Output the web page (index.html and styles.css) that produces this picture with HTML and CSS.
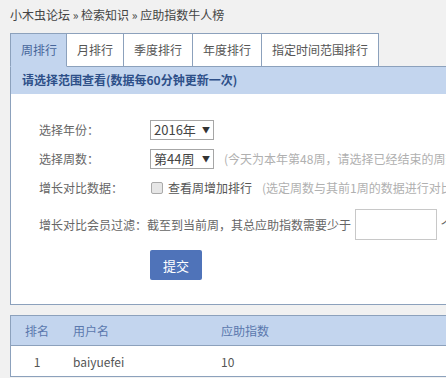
FILE: index.html
```html
<!DOCTYPE html>
<html>
<head>
    <meta charset="utf-8">
    <link rel="stylesheet" href="styles.css">
</head>
<body>
    <div class="page">
        <div class="crumb">小木虫论坛 » 检索知识 » 应助指数牛人榜</div>

        <div class="tabs">
            <span class="tab active">周排行</span>
            <span class="tab">月排行</span>
            <span class="tab">季度排行</span>
            <span class="tab">年度排行</span>
            <span class="tab">指定时间范围排行</span>
        </div>

        <div class="panel">
            <div class="panel-head">请选择范围查看(数据每60分钟更新一次)</div>
            <div class="panel-body">
                <div class="row">
                    <span class="label">选择年份：</span>
                    <span class="select">2016年 <i>▼</i></span>
                </div>
                <div class="row">
                    <span class="label">选择周数：</span>
                    <span class="select">第44周 <i>▼</i></span>
                    <span class="hint">(今天为本年第48周，请选择已经结束的周数进行查询)</span>
                </div>
                <div class="row">
                    <span class="label">增长对比数据：</span>
                    <span class="check"></span>
                    <span class="check-text">查看周增加排行</span>
                    <span class="hint">(选定周数与其前1周的数据进行对比)</span>
                </div>
                <div class="row row-filter">
                    <span>增长对比会员过滤：截至到当前周，其总应助指数需要少于</span>
                    <span class="text-box"></span>
                    <span>个</span>
                </div>
                <div class="row-submit">
                    <button class="btn">提交</button>
                </div>
            </div>
        </div>

        <table class="rank">
            <tr>
                <th class="col-rank">排名</th>
                <th class="col-name">用户名</th>
                <th>应助指数</th>
            </tr>
            <tr>
                <td class="col-rank">1</td>
                <td class="col-name">baiyuefei</td>
                <td>10</td>
            </tr>
        </table>
    </div>
</body>
</html>
```

FILE: styles.css
```css
body {
    margin: 0;
    background-color: #f1f1f1;
    font-family: "Noto Sans CJK SC", "Liberation Sans", sans-serif;
    font-size: 12px;
    color: #444;
    overflow: hidden;
}

.page {
    padding-left: 10px;
    width: 760px;
}

.crumb {
    height: 33px;
    line-height: 30px;
    font-size: 12px;
    color: #444;
}

.tabs {
    display: flex;
    position: relative;
    z-index: 1;
    margin-bottom: -1px;
}

.tab {
    height: 32px;
    line-height: 32px;
    padding: 0 10px;
    background-color: #fff;
    border: 1px solid #8ca1bc;
    border-left: none;
    border-bottom: 1px solid #8ca1bc;
    color: #555;
}

.tab:first-child {
    border-left: 1px solid #8ca1bc;
}

.tab.active {
    background-color: #c3d5ee;
    border-bottom-color: #c3d5ee;
    padding: 0 9px 0 10px;
    color: #47659a;
}

.panel {
    border: 1px solid #8ca1bc;
    border-right: none;
    background-color: #fff;
}

.panel-head {
    height: 27px;
    line-height: 26px;
    padding-left: 11px;
    background-color: #c3d5ee;
    color: #2d4f88;
    font-weight: bold;
}

.panel-body {
    padding: 21px 0 24px 28px;
    background-color: #fff;
}

.row {
    display: flex;
    align-items: center;
    height: 29px;
    white-space: nowrap;
    color: #666;
}

.label {
    width: 111px;
}

.select {
    display: inline-flex;
    align-items: center;
    justify-content: space-between;
    width: 56px;
    height: 18px;
    padding: 0 3px;
    border: 1px solid #a6a6a6;
    color: #444;
    font-size: 13px;
}

.select i {
    font-style: normal;
    font-size: 8px;
    color: #333;
}

.hint {
    margin-left: 10px;
    color: #b0b0b0;
}

.check {
    width: 10px;
    height: 10px;
    margin: 0 5px 0 1px;
    border: 1px solid #aaa;
    border-radius: 2px;
    background-color: #e6e6e6;
}

.check-text {
    color: #555;
}

.row-filter {
    height: 36px;
    margin-top: 4px;
}

.text-box {
    width: 80px;
    height: 29px;
    margin: 0 4px 0 4px;
    border: 1px solid #c8c8c8;
    background-color: #fff;
}

.row-submit {
    padding: 8px 0 0 111px;
}

.btn {
    width: 52px;
    height: 30px;
    border: none;
    border-radius: 2px;
    background-color: #4f73b9;
    color: #fff;
    font-family: inherit;
    font-size: 13px;
    cursor: pointer;
}

.rank {
    width: 100%;
    margin-top: 10px;
    border-collapse: collapse;
    border: 1px solid #8ca1bc;
    border-right: none;
    background-color: #fff;
}

.rank th {
    height: 29px;
    background-color: #c3d5ee;
    color: #5a78ad;
    font-weight: normal;
    text-align: left;
    border-bottom: 1px solid #8ca1bc;
}

.rank td {
    height: 30px;
    color: #555;
    border-bottom: 1px solid #8ca1bc;
}

.rank th, .rank td {
    padding: 0;
}

.rank .col-rank {
    width: 52px;
    text-align: center;
}

.rank .col-name {
    width: 148px;
    padding-left: 10px;
}
```
